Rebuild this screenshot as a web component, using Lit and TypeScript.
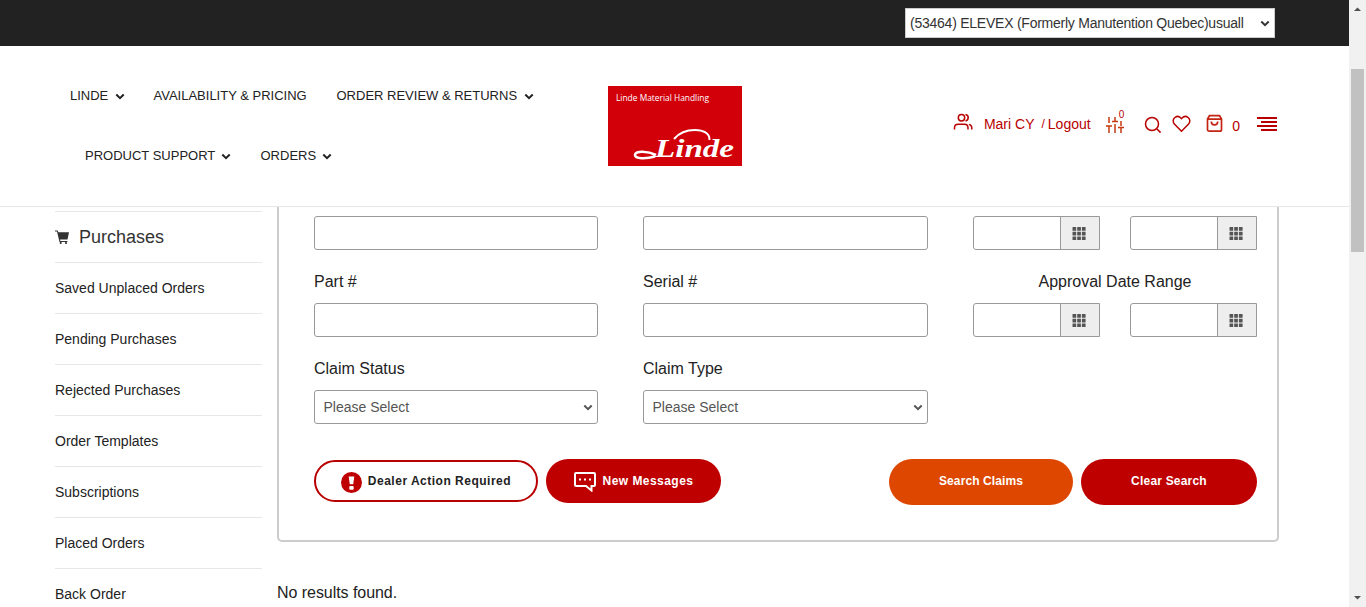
import { LitElement, html, css, svg } from "lit";
import { customElement } from "lit/decorators.js";

const chevron = (cls: string) => html`<svg class=${cls} viewBox="0 0 10 7"><path d="M1.3 1.5 5 5.1 8.7 1.5" fill="none" stroke="currentColor" stroke-width="2"/></svg>`;

const menuRows = [
  [
    { label: "LINDE", sub: true, w: 38.5 },
    { label: "AVAILABILITY & PRICING", sub: false, w: 154 },
    { label: "ORDER REVIEW & RETURNS", sub: true, w: 181 },
  ],
  [
    { label: "PRODUCT SUPPORT", sub: true, w: 130 },
    { label: "ORDERS", sub: true, w: 55.5 },
  ],
];

const sideLinks = ["Saved Unplaced Orders", "Pending Purchases", "Rejected Purchases", "Order Templates", "Subscriptions", "Placed Orders", "Back Order"];

@customElement("app-root")
export class AppRoot extends LitElement {
  static styles = css`
    :host { display: flex; width: 1366px; height: 607px; overflow: hidden; background: #fff; font-family: "Liberation Sans", Arial, sans-serif; color: #222; font-size: 14px; }
    * { box-sizing: border-box; }
    svg { display: block; flex: none; }
    .page { width: 1349px; height: 607px; overflow: hidden; display: flex; flex-direction: column; }
    .top { height: 46px; flex: none; background: #222; display: flex; justify-content: flex-end; padding: 8px 74px 0 0; }
    .account { width: 370px; height: 30px; background: #fff; border: 1px solid #ccc; display: flex; align-items: center; justify-content: space-between; padding: 0 4px 0 4px; color: #333; white-space: nowrap; letter-spacing: -0.24px; }
    .arrow { width: 10px; height: 7px; }
    .head { height: 161px; flex: none; border-bottom: 1px solid #e7e7e7; display: flex; }
    .nav { width: 608px; padding: 19px 0 0 70px; }
    .navrow { height: 60px; display: flex; gap: 29px; align-items: center; font-size: 13px; white-space: nowrap; }
    .navrow + .navrow { padding-left: 15px; gap: 29.5px; }
    .item { display: flex; align-items: center; gap: 6px; }
    .item svg { margin-top: 2px; }
    .logo { margin-top: 40px; width: 134px; height: 80px; }
    .tools { flex: 1; display: flex; align-items: flex-start; padding: 0 72px 0 211px; color: #b90000; white-space: nowrap; }
    .people { margin-top: 66px; width: 20px; height: 20px; }
    .user { margin: 70px 0 0 11px; line-height: 16px; }
    .slash { margin: 70px 0 0 7px; font-size: 12px; line-height: 17px; }
    .logout { margin: 70px 0 0 3px; line-height: 16px; }
    .sliders { margin: 69px 0 0 14px; width: 20px; height: 19px; }
    .tiny { margin: 62px 0 0 -6px; font-size: 10px; line-height: 14px; }
    .search { margin: 70px 0 0 20px; width: 18px; height: 18px; }
    .heart { margin: 69px 0 0 10px; width: 19px; height: 18px; }
    .bag { margin: 67px 0 0 14px; width: 19px; height: 20px; }
    .count { margin: 72px 0 0 8px; line-height: 16px; }
    .burger { margin: 71px 0 0 17px; width: 20px; height: 15px; }
    .body { flex: 1; min-height: 0; display: flex; padding-left: 55px; gap: 15px; }
    .side { width: 207px; padding-top: 4px; }
    .link { height: 51px; border-top: 1px solid #e7e7e7; display: flex; align-items: center; }
    .title { font-size: 18px; color: #333; gap: 9px; }
    .cart { width: 15px; height: 15px; }
    .main { width: 1002px; }
    .panel { height: 335px; border: 2px solid #ccc; border-top: 0; border-radius: 0 0 5px 5px; padding: 9px 20px 0 35px; }
    .grid { display: grid; grid-template-columns: 284px 285px 284px; column-gap: 45px; }
    .label { height: 53px; display: flex; align-items: center; font-size: 16px; padding-top: 10px; }
    .label.mid { justify-content: center; }
    .box { height: 34px; border: 1px solid #999; border-radius: 3px; background: #fff; }
    .select { display: flex; align-items: center; justify-content: space-between; padding: 0 4px 0 8.5px; color: #555; }
    .dates { display: flex; gap: 30px; }
    .date { width: 127px; height: 34px; border: 1px solid #999; border-radius: 3px 0 0 3px; display: flex; }
    .entry { flex: 1; }
    .pick { width: 39px; background: #eee; border-left: 1px solid #999; display: flex; align-items: center; justify-content: center; color: #555; padding: 1px 2px 0 0; }
    .pick svg { width: 14px; height: 14px; }
    .actions { display: flex; gap: 8px; align-items: flex-start; margin-top: 35px; font-weight: bold; font-size: 12px; color: #fff; white-space: nowrap; }
    .btn { height: 46px; border-radius: 23px; display: flex; align-items: center; justify-content: center; padding-bottom: 2px; }
    .need { width: 224px; height: 42px; margin-top: 1px; border: 2px solid #b90000; color: #222; gap: 6px; padding: 0; letter-spacing: .5px; }
    .need svg { width: 21px; height: 21px; margin-top: 3px; }
    .msg { width: 175px; height: 44px; background: #be0000; gap: 7px; padding: 0; letter-spacing: .45px; }
    .msg svg { margin-top: 2px; width: 22px; height: 20px; }
    .find { width: 184px; background: #de4700; margin-left: auto; letter-spacing: .1px; }
    .clear { width: 176px; background: #be0000; letter-spacing: .2px; }
    .none { margin-top: 41px; font-size: 16px; line-height: 20px; letter-spacing: -.05px; }
    .bar { width: 17px; height: 607px; background: #f1f1f1; display: flex; flex-direction: column; align-items: center; }
    .bar svg { width: 17px; height: 17px; }
    .thumb { width: 13px; height: 183px; margin: 52px 0 auto; background: #c1c1c1; }
  `;

  date() {
    return html`<div class="date"><div class="entry"></div><div class="pick"><svg viewBox="0 0 14 14" fill="currentColor">
      ${[0, 4.7, 9.4].map((y) => [0.5, 5.2, 9.9].map((x) => svg`<rect x=${x} y=${y} width="3.7" height="3.7" rx=".3"/>`))}</svg></div></div>`;
  }
  dates() { return html`<div class="dates">${this.date()}${this.date()}</div>`; }
  select() { return html`<div class="box select"><span>Please Select</span>${chevron("arrow")}</div>`; }

  render() {
    return html`
      <div class="page">
        <div class="top"><div class="account"><span>(53464) ELEVEX (Formerly Manutention Quebec)usuall</span>${chevron("arrow")}</div></div>
        <header class="head">
          <nav class="nav">${menuRows.map((r) => html`<div class="navrow">${r.map((m) => html`<span class="item"><span style="width:${m.w}px">${m.label}</span>${m.sub ? chevron("arrow") : ""}</span>`)}</div>`)}</nav>
          <svg class="logo" viewBox="0 0 134 80">
            <rect width="134" height="80" fill="#d10009"/>
            <text x="8" y="15" fill="#fff" font-family="Open Sans, Noto Sans, sans-serif" font-size="9.500" textLength="93" lengthAdjust="spacingAndGlyphs">Linde Material Handling</text>
            <path d="M101.500 54C102 47 95 44 87 44C78 44 71 47 66 53" fill="none" stroke="#fff" stroke-width="2"/>
            <path d="M47 70.500C38 73 27 73 27 69C27 64.500 40 65 48 69" fill="none" stroke="#fff" stroke-width="2.600"/>
            <text x="47" y="71" fill="#fff" font-family="Liberation Serif, serif" font-style="italic" font-weight="bold" font-size="26" textLength="79" lengthAdjust="spacingAndGlyphs">Linde</text>
          </svg>
          <div class="tools">
            <svg class="people" viewBox="0 0 20 20" fill="none" stroke="currentColor" stroke-width="1.500"><circle cx="8.500" cy="5.700" r="3.200"/><path d="M1.500 17.500v-1.700c0-2.300 1.500-3.600 3.700-3.600h6.300c2.200 0 3.500 1.300 3.500 3.600v1.700M12.500 2.600c1.800.3 2.700 1.500 2.700 3.100s-1 2.800-2.700 3.200M16 12.400c1.800.5 2.800 1.700 2.800 3.400v1.700"/></svg>
            <span class="user">Mari CY</span><span class="slash">/</span><span class="logout">Logout</span>
            <svg class="sliders" viewBox="0 0 20 19" fill="none" stroke="#c53a12" stroke-width="1.500"><path d="M4 2v6M4 11v7M10 2v4.500M10 9v9M16 6v5M16 13v5M1 11h6M7 6.500h6M13 12.500h6"/></svg>
            <span class="tiny">0</span>
            <svg class="search" viewBox="0 0 18 18" fill="none" stroke="currentColor" stroke-width="1.500"><circle cx="8" cy="8" r="6.500"/><path d="m13 13 3.600 3.600"/></svg>
            <svg class="heart" viewBox="0 0 19 18" fill="none" stroke="currentColor" stroke-width="1.500"><path d="M9.500 16.200 2.600 9.300C.5 7.200.9 4 2.900 2.500 5 .9 7.700 1.300 9.500 3.600 11.300 1.300 14 .9 16.100 2.500c2 1.500 2.400 4.700.3 6.800Z"/></svg>
            <svg class="bag" viewBox="0 0 19 20" fill="none" stroke="#c32512" stroke-width="1.700"><path d="M4.500 2.700h10l2 3.200v10.600c0 1-.7 1.700-1.700 1.700H4.200c-1 0-1.700-.7-1.700-1.700V5.900ZM2.500 6.200h14M6.300 8.500c0 4.500 6.400 4.500 6.400 0"/></svg>
            <span class="count">0</span>
            <svg class="burger" viewBox="0 0 20 15" fill="#b90000"><path d="M0 0h20v2H0zM4 4h16v2H4zM0 8h20v2H0zM4 12h16v2H4z"/></svg>
          </div>
        </header>
        <div class="body">
          <aside class="side">
            <div class="link title"><svg class="cart" viewBox="0 0 15 15" fill="#333"><path d="M0 .5h2.700l.6 1.700H14L12.500 9.500H5l.4 1.400h7v1.100H4.500L2 1.600H0z"/><circle cx="5.700" cy="13" r="1.100"/><circle cx="11" cy="13" r="1.100"/></svg><span>Purchases</span></div>
            ${sideLinks.map((l) => html`<div class="link">${l}</div>`)}
          </aside>
          <main class="main">
            <section class="panel">
              <div class="grid">
                <div class="box"></div><div class="box"></div>${this.dates()}
                <div class="label">Part #</div><div class="label">Serial #</div><div class="label mid">Approval Date Range</div>
                <div class="box"></div><div class="box"></div>${this.dates()}
                <div class="label">Claim Status</div><div class="label">Claim Type</div><div></div>
                ${this.select()}${this.select()}
              </div>
              <div class="actions">
                <div class="btn need"><svg viewBox="0 0 21 21"><circle cx="10.500" cy="10.500" r="10.500" fill="#be0000"/><path d="M7.700 4.500h5.600l-1.100 7.700H8.800z" fill="#fff"/><rect x="8.300" y="14" width="4.400" height="3.700" rx="1" fill="#fff"/></svg><span>Dealer Action Required</span></div>
                <div class="btn msg"><svg viewBox="0 0 22 20" fill="none" stroke="#fff" stroke-width="2"><path d="M2 1h18q1 0 1 1v11q0 1-1 1h-2.500v4.500L12 14H2q-1 0-1-1V2q0-1 1-1Z"/><path d="M5 7.500h2M10 7.500h2M15 7.500h2"/></svg><span>New Messages</span></div>
                <div class="btn find">Search Claims</div><div class="btn clear">Clear Search</div>
              </div>
            </section>
            <div class="none">No results found.</div>
          </main>
        </div>
      </div>
      <div class="bar"><svg viewBox="0 0 17 17"><path d="M5 11h7L8.500 7.500z" fill="#505050"/></svg><div class="thumb"></div><svg viewBox="0 0 17 17"><path d="M5 6h7L8.500 9.500z" fill="#505050"/></svg></div>
    `;
  }
}
